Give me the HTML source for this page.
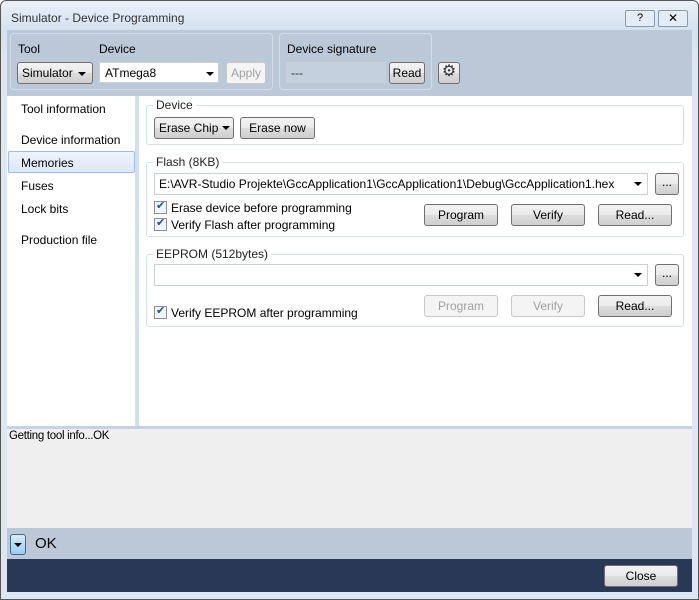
<!DOCTYPE html><html><head><style>
*{box-sizing:border-box;margin:0;padding:0}
body{width:699px;height:600px;overflow:hidden;background:#fff;font-family:"Liberation Sans",sans-serif;font-size:12px;color:#000;position:relative}
.a{position:absolute}
.btn{position:absolute;border:1px solid #707070;border-radius:3px;background:linear-gradient(#f2f2f2,#ebebeb 50%,#dddddd 50%,#cfcfcf);text-align:center;line-height:20px;height:22px}
.dis{border-color:#c8c8c8;color:#a0a0a0;background:#f4f4f4}
.grp{position:absolute;border:1px solid #d5dfe5;border-radius:3px}
.lg{position:absolute;background:#fff;padding:0 3px;top:-8px;left:6px;color:#222}
.cb{position:absolute;width:13px;height:13px;border:1px solid #8f8f8f;background:#f0f4fa}
.cb::after{content:"✔";position:absolute;left:1px;top:-3px;font-size:11px;color:#2a4d8a}
.tri{position:absolute;width:0;height:0;border-left:4px solid transparent;border-right:4px solid transparent;border-top:4px solid #000}
</style></head><body>
<div class="a" style="left:0;top:0;width:699px;height:600px;border:1px solid #555;border-radius:6px 6px 0 0;background:linear-gradient(#eaf1f9,#d4e1ef 30px,#dce7f3 60px)"></div>
<div class="a" style="left:11px;top:11px;color:#333;font-size:12px">Simulator - Device Programming</div>
<div class="a" style="left:625px;top:10px;width:30px;height:17px;border:1px solid #8a9bb0;border-radius:2px;background:#e4ecf5;text-align:center;font-size:11px;line-height:15px">?</div>
<div class="a" style="left:658px;top:10px;width:30px;height:17px;border:1px solid #8a9bb0;border-radius:2px;background:#e4ecf5;text-align:center;font-size:12px;line-height:15px">✕</div>
<div class="a" style="left:7px;top:30px;width:685px;height:66px;background:#bbc8d8"></div>
<div class="a" style="left:10px;top:33px;width:263px;height:57px;border:1px solid #d3dde8;border-radius:4px"></div>
<div class="a" style="left:18px;top:42px">Tool</div>
<div class="a" style="left:99px;top:42px">Device</div>
<div class="btn" style="left:17px;top:62px;width:76px;text-align:left;padding-left:4px">Simulator</div><div class="tri" style="left:78px;top:72px"></div>
<div class="a" style="left:99px;top:62px;width:120px;height:21px;background:#fff;border:1px solid #c8d0da;padding:3px 5px">ATmega8</div><div class="tri" style="left:206px;top:72px"></div>
<div class="btn dis" style="left:226px;top:62px;width:40px">Apply</div>
<div class="a" style="left:279px;top:33px;width:153px;height:57px;border:1px solid #d3dde8;border-radius:4px"></div>
<div class="a" style="left:287px;top:42px">Device signature</div>
<div class="a" style="left:286px;top:62px;width:100px;height:21px;border:1px solid #c8d0da;padding:3px 4px;color:#333;background:#c4d0de">---</div>
<div class="btn" style="left:389px;top:62px;width:36px">Read</div>
<div class="btn" style="left:438px;top:62px;width:22px;font-size:16px;line-height:18px;color:#333">⚙</div>
<div class="a" style="left:7px;top:96px;width:685px;height:330px;background:#fff"></div>
<div class="a" style="left:135px;top:96px;width:4px;height:330px;background:#d4dfec"></div>
<div class="a" style="left:21px;top:102px">Tool information</div>
<div class="a" style="left:21px;top:133px">Device information</div>
<div class="a" style="left:8px;top:151px;width:127px;height:22px;border:1px solid #9fbde6;border-radius:2px;background:linear-gradient(#edf3fb,#dde8f6)"></div>
<div class="a" style="left:21px;top:156px">Memories</div>
<div class="a" style="left:21px;top:179px">Fuses</div>
<div class="a" style="left:21px;top:202px">Lock bits</div>
<div class="a" style="left:21px;top:233px">Production file</div>
<div class="grp" style="left:146px;top:105px;width:538px;height:40px"><span class="lg">Device</span></div>
<div class="btn" style="left:154px;top:117px;width:80px;text-align:left;padding-left:4px">Erase Chip</div><div class="tri" style="left:222px;top:126px"></div>
<div class="btn" style="left:240px;top:117px;width:75px">Erase now</div>
<div class="grp" style="left:146px;top:162px;width:538px;height:75px"><span class="lg">Flash (8KB)</span></div>
<div class="a" style="left:154px;top:173px;width:494px;height:22px;border:1px solid #c8d0da;padding:3px 4px;background:#fff">E:\AVR-Studio Projekte\GccApplication1\GccApplication1\Debug\GccApplication1.hex</div><div class="tri" style="left:634px;top:182px"></div>
<div class="btn" style="left:655px;top:173px;width:24px;line-height:16px">...</div>
<div class="cb" style="left:154px;top:201px"></div><div class="a" style="left:171px;top:201px">Erase device before programming</div>
<div class="cb" style="left:154px;top:218px"></div><div class="a" style="left:171px;top:218px">Verify Flash after programming</div>
<div class="btn" style="left:424px;top:204px;width:74px">Program</div>
<div class="btn" style="left:511px;top:204px;width:74px">Verify</div>
<div class="btn" style="left:598px;top:204px;width:74px">Read...</div>
<div class="grp" style="left:146px;top:254px;width:538px;height:73px"><span class="lg">EEPROM (512bytes)</span></div>
<div class="a" style="left:154px;top:264px;width:494px;height:22px;border:1px solid #c8d0da;background:#fff"></div><div class="tri" style="left:634px;top:273px"></div>
<div class="btn" style="left:655px;top:264px;width:24px;line-height:16px">...</div>
<div class="cb" style="left:154px;top:306px"></div><div class="a" style="left:171px;top:306px">Verify EEPROM after programming</div>
<div class="btn dis" style="left:424px;top:295px;width:74px">Program</div>
<div class="btn dis" style="left:511px;top:295px;width:74px">Verify</div>
<div class="btn" style="left:598px;top:295px;width:74px">Read...</div>
<div class="a" style="left:7px;top:426px;width:685px;height:3px;background:#c5d2e2"></div>
<div class="a" style="left:7px;top:429px;width:685px;height:99px;background:#efefef"></div>
<div class="a" style="left:9px;top:430px;font-size:11.5px;letter-spacing:-0.3px">Getting tool info...OK</div>
<div class="a" style="left:7px;top:528px;width:685px;height:31px;background:#bcc8d8"></div>
<div class="a" style="left:10px;top:534px;width:16px;height:21px;border:1px solid #3c6a96;border-radius:3px;background:linear-gradient(#d6ecfb,#9ccbee)"></div><div class="tri" style="left:14px;top:543px"></div>
<div class="a" style="left:35px;top:535px;font-size:15px">OK</div>
<div class="a" style="left:7px;top:559px;width:685px;height:33px;background:#283855"></div>
<div class="btn" style="left:604px;top:565px;width:74px">Close</div>
</body></html>
